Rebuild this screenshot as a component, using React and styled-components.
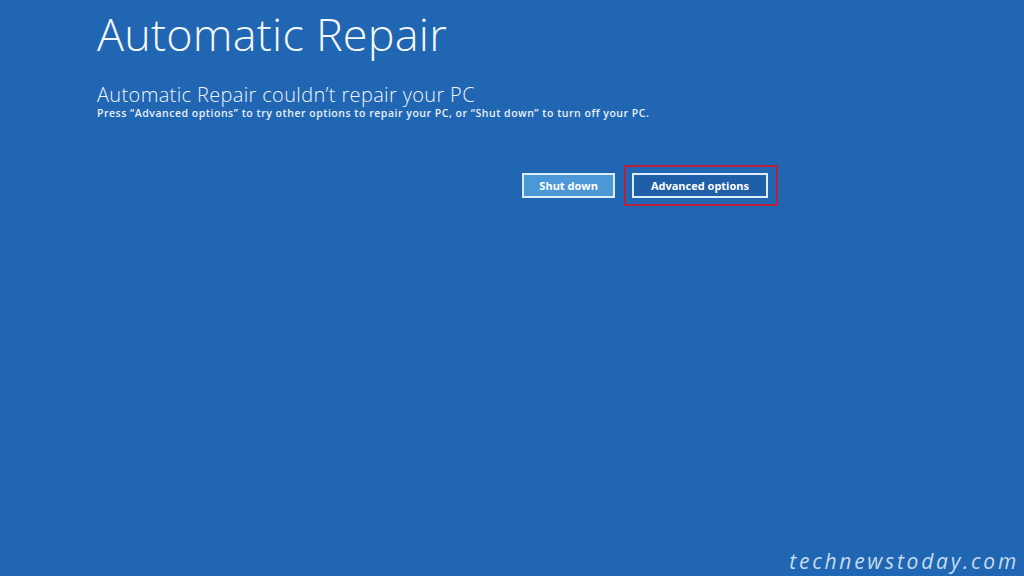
import React from 'react'
import styled, { createGlobalStyle } from 'styled-components'

// Page-wide reset and the recovery blue
const GlobalStyle = createGlobalStyle`
  html, body {
    margin: 0;
    padding: 0;
    background: #2166b2;
  }
  body {
    font-family: "Open Sans", "Noto Sans", sans-serif;
    color: #ffffff;
  }
`

const Screen = styled.div`
  position: relative;
  width: 1024px;
  height: 576px;
  overflow: hidden;
  background: #2166b2;
  box-sizing: border-box;
  padding: 8px 0 0 97px;
`

const Column = styled.div`
  width: 681px;
  display: flex;
  flex-direction: column;
`

const Title = styled.h1`
  margin: 0;
  font-size: 45px;
  font-weight: 300;
  line-height: 52px;
  letter-spacing: 0.2px;
  color: #f4f8fc;
`

const Heading = styled.h2`
  margin: 23px 0 0 0;
  font-size: 20px;
  font-weight: 300;
  line-height: 24px;
  letter-spacing: 0.35px;
  color: #eef4fb;
`

const Note = styled.p`
  margin: -1px 0 0 0;
  font-size: 10.5px;
  font-weight: 600;
  line-height: 14px;
  letter-spacing: 0.52px;
  color: #e8f0fa;
`

const Actions = styled.div`
  margin-top: 45px;
  display: flex;
  justify-content: flex-end;
  align-items: center;
  gap: 9px;
`

const Button = styled.button`
  height: 25px;
  padding: 0 ${p => p.$pad}px;
  box-sizing: border-box;
  border: 2px solid #dcecf8;
  background: ${p => (p.$primary ? '#1f5fa8' : '#4c98d6')};
  color: #ffffff;
  font-family: "Open Sans", "Noto Sans", sans-serif;
  font-size: 11px;
  font-weight: 700;
  line-height: 21px;
  cursor: default;
`

// red highlight frame around the chosen button
const Highlight = styled.div`
  display: flex;
  padding: 6px 8px 6px 6px;
  border: 2px solid #b8203c;
`

const Watermark = styled.div`
  position: absolute;
  right: 5px;
  bottom: 2px;
  font-family: "Open Sans", "Noto Sans", sans-serif;
  font-style: italic;
  font-weight: 400;
  font-size: 21px;
  line-height: 26px;
  letter-spacing: 2.75px;
  color: rgba(222, 236, 250, 0.88);
`

function App() {
  return (
    <React.Fragment>
      <GlobalStyle />
      <Screen>
        <Column>
          <Title>Automatic Repair</Title>
          <Heading>Automatic Repair couldn’t repair your PC</Heading>
          <Note>
            Press “Advanced options” to try other options to repair your PC, or “Shut down” to turn off your PC.
          </Note>
          <Actions>
            <Button $pad={15}>Shut down</Button>
            <Highlight>
              <Button $primary $pad={17}>Advanced options</Button>
            </Highlight>
          </Actions>
        </Column>
        <Watermark>technewstoday.com</Watermark>
      </Screen>
    </React.Fragment>
  )
}

export default App
